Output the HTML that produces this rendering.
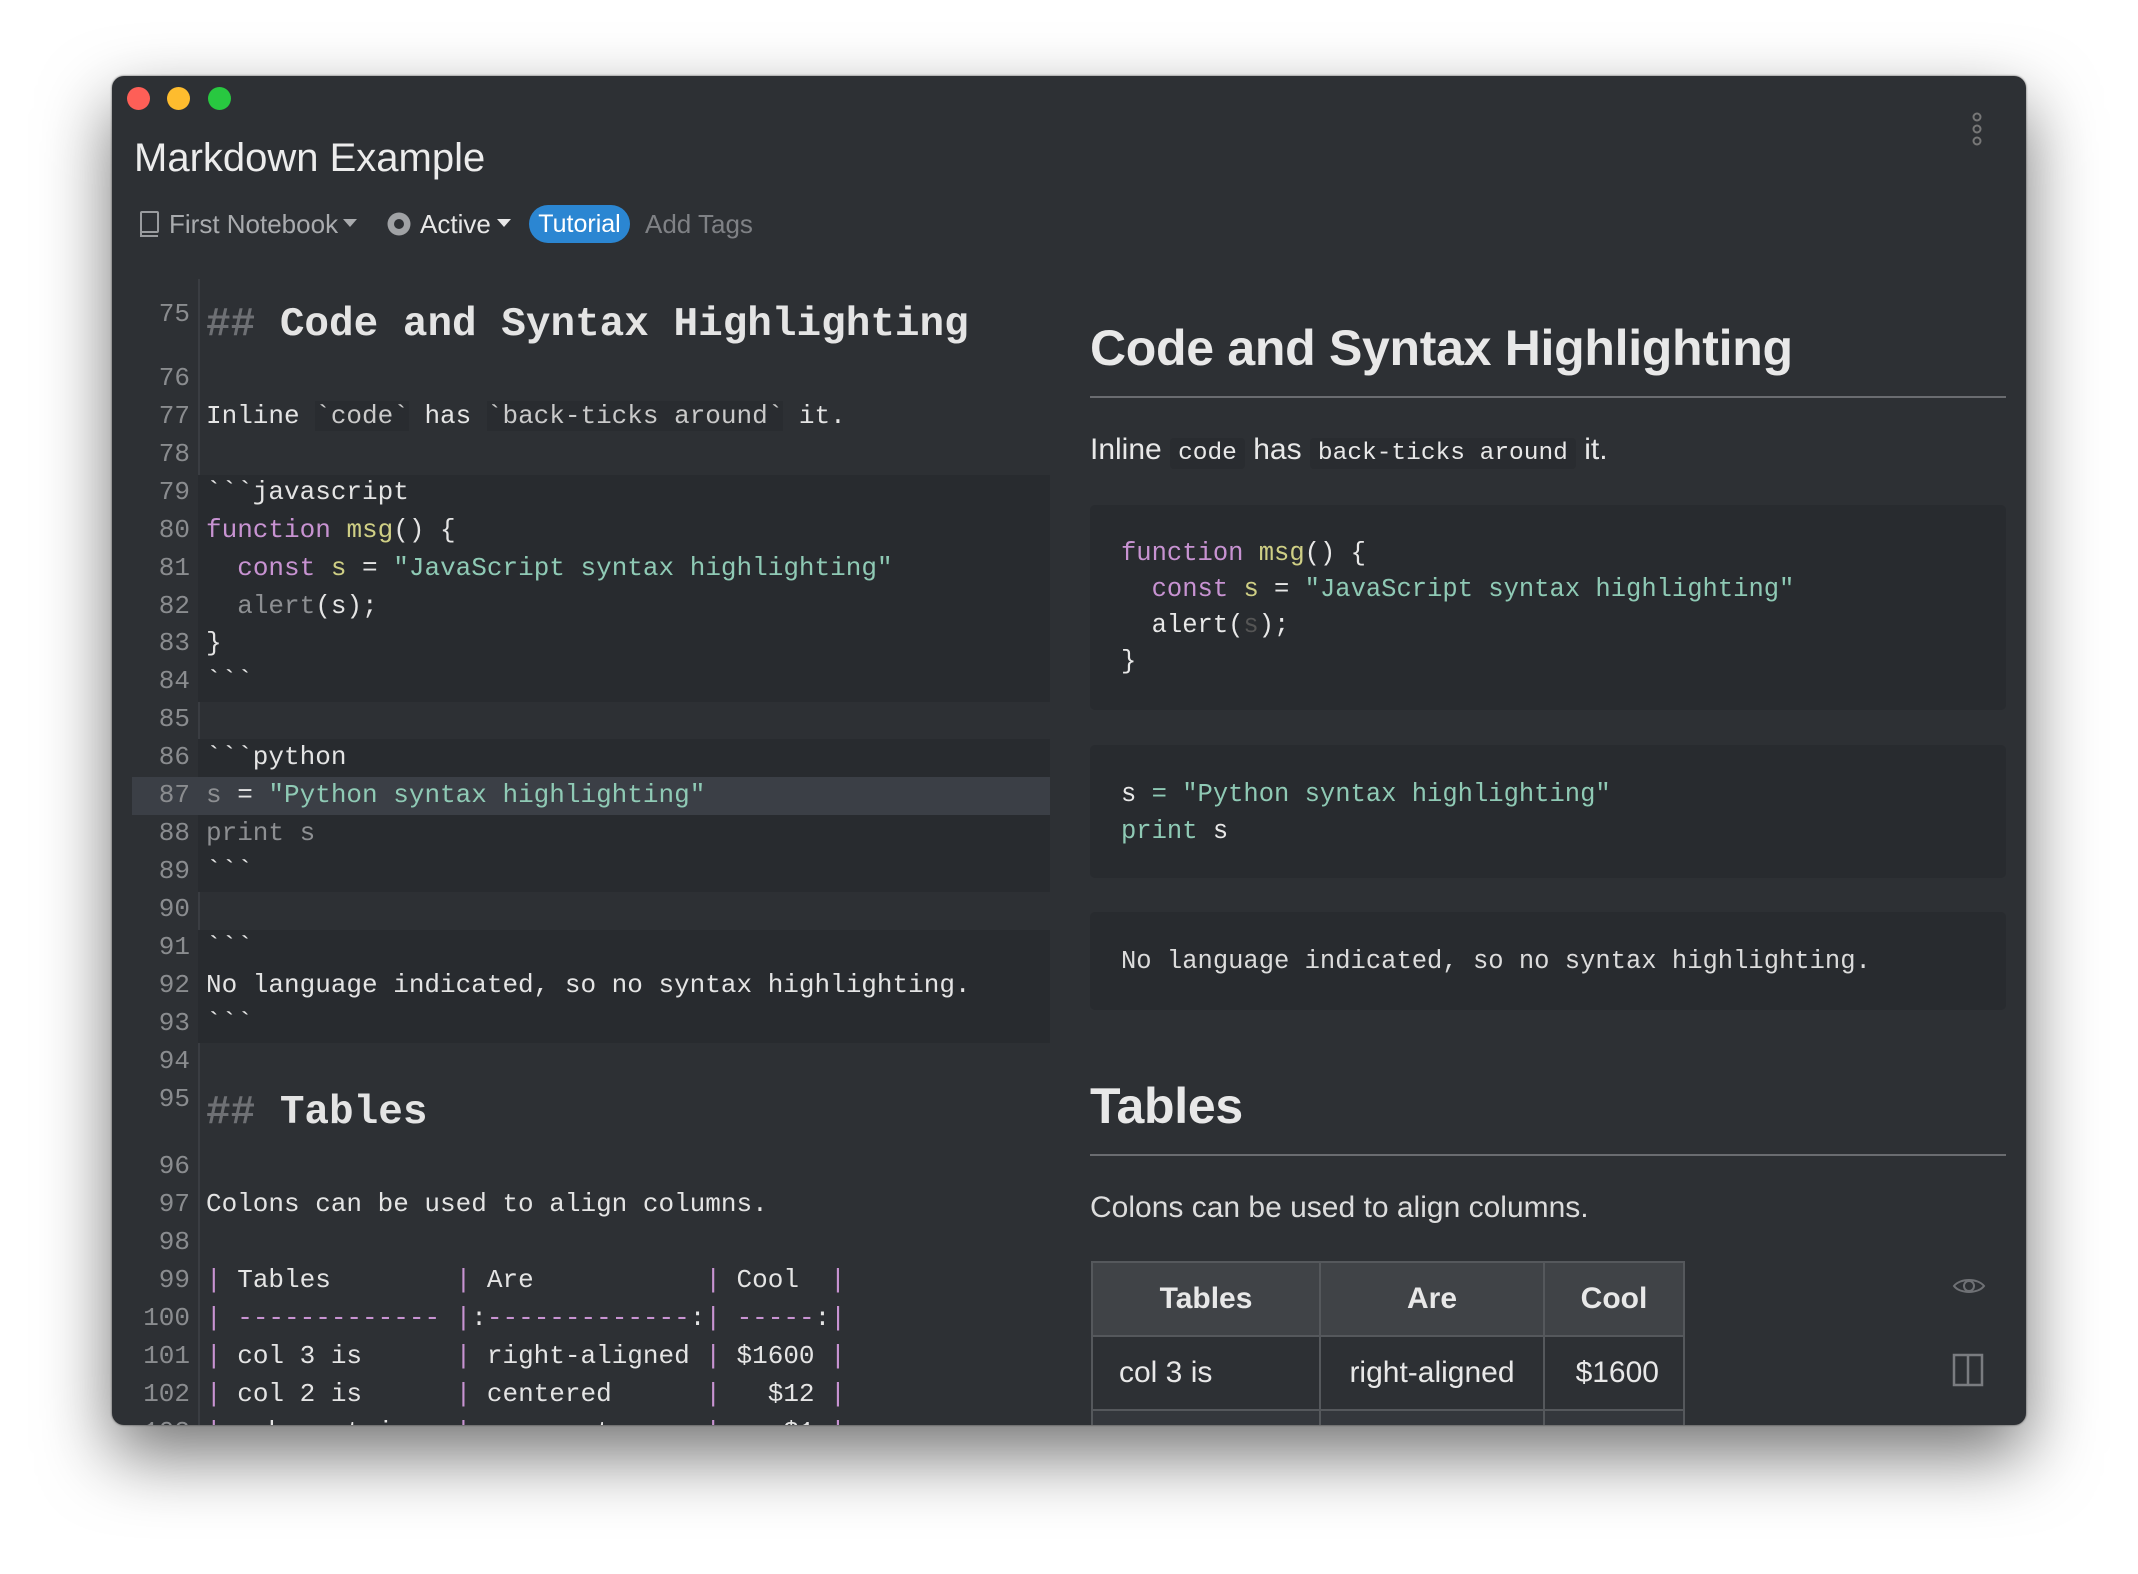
<!DOCTYPE html>
<html><head><meta charset="utf-8"><style>
*{margin:0;padding:0;box-sizing:border-box}
html,body{width:2138px;height:1574px;background:#fff;overflow:hidden;font-family:"Liberation Sans",sans-serif}
#win{position:absolute;left:112px;top:76px;width:1914px;height:1349px;background:#2d3034;border-radius:12px;box-shadow:0 30px 70px rgba(0,0,0,.55),0 0 2px rgba(0,0,0,.6);overflow:hidden}
.dot{position:absolute;top:11px;width:23px;height:23px;border-radius:50%}
.abs{position:absolute;white-space:pre}
#ed{position:absolute;left:0;top:203px;width:960px;height:1146px;overflow:hidden;font-family:"Liberation Mono",monospace;font-size:26px;color:#e4e4e4}
.ln{position:absolute;left:0;width:78px;text-align:right;color:#8a8c8f;height:38px;line-height:38px}
.tx{position:absolute;left:94px;white-space:pre;height:38px;line-height:38px}
.blk{position:absolute;left:86px;width:852px;background:#282b2f}
.k{color:#c893d2}.f{color:#cfcf85}.s{color:#8fcab5}.g{color:#8d8f92}.h{color:#6e7074}.p{color:#c893d2}.w{color:#d8d8d8}
#pv{position:absolute;left:978px;top:0;width:916px;height:1349px;color:#e8e8e8}
.h1{position:absolute;left:0;font-weight:bold;font-size:50px;white-space:pre;letter-spacing:-.3px}
.hr{position:absolute;left:0;width:916px;height:2px;background:#6a6c70}
.pr{position:absolute;left:0;width:916px;background:#282b2f;border-radius:5px}
.mono{font-family:"Liberation Mono",monospace;font-size:25.5px}
code{font-family:"Liberation Mono",monospace;font-size:24.5px;background:#292c30;padding:2px 8px;border-radius:4px}
table{position:absolute;left:1px;top:1185px;border-collapse:collapse;font-size:30px}
td,th{border:2px solid #55585c;height:74px}
th{background:#404347;font-weight:bold}
</style></head><body>
<div id="win">
<div class="dot" style="left:15px;background:#fe5f57"></div>
<div class="dot" style="left:55px;background:#febc2e"></div>
<div class="dot" style="left:96px;background:#28c840"></div>
<div class="abs" style="left:22px;top:56px;font-size:40px;line-height:52px;color:#ececec">Markdown Example</div>
<svg class="abs" style="left:1858px;top:36px" width="14" height="34" viewBox="0 0 14 34"><g fill="none" stroke="#777" stroke-width="2"><circle cx="7" cy="5" r="3.5"/><circle cx="7" cy="17" r="3.5"/><circle cx="7" cy="29" r="3.5"/></g></svg>
<svg class="abs" style="left:26px;top:134px" width="22" height="28" viewBox="0 0 22 28"><g fill="none" stroke="#9a9c9f" stroke-width="2"><rect x="3" y="2" width="17" height="20" rx="1"/><path d="M3 22v4h17"/></g></svg>
<div class="abs" style="left:57px;top:131px;font-size:26px;line-height:34px;color:#a9abae">First Notebook</div>
<svg class="abs" style="left:231px;top:142px" width="14" height="10"><path d="M0 1h14L7 9z" fill="#a9abae"/></svg>
<svg class="abs" style="left:274px;top:135px" width="26" height="26"><circle cx="13" cy="13" r="11.5" fill="#a0a2a5"/><circle cx="13" cy="13" r="5" fill="#2d3034"/></svg>
<div class="abs" style="left:308px;top:131px;font-size:26px;line-height:34px;color:#e8e8e8">Active</div>
<svg class="abs" style="left:385px;top:142px" width="14" height="10"><path d="M0 1h14L7 9z" fill="#e8e8e8"/></svg>
<div class="abs" style="left:417px;top:129px;width:101px;height:38px;border-radius:19px;background:#2b86d2;color:#fff;font-size:25px;line-height:38px;text-align:center">Tutorial</div>
<div class="abs" style="left:533px;top:131px;font-size:26px;line-height:34px;color:#7f8185">Add Tags</div>

<div id="ed">
<div style="position:absolute;left:86px;top:0;width:2px;height:1149px;background:#3a3d42"></div>
<div class="blk" style="top:196px;height:227px"></div>
<div class="blk" style="top:460px;height:153px"></div>
<div class="blk" style="top:651px;height:113px"></div>
<div style="position:absolute;left:20px;top:498px;width:918px;height:38px;background:#3b3f46"></div>
<div class="ln" style="top:-27px">74</div>
<div class="ln" style="top:16px">75</div>
<div class="tx" style="top:13px;font-size:41px;font-weight:bold;height:66px;line-height:66px"><span class="h">##</span> Code and Syntax Highlighting</div>
<div class="ln" style="top:80px">76</div>
<div class="ln" style="top:118px">77</div><div class="tx" style="top:118px">Inline <span style="background:#292c30;color:#c9c9c9">&#96;code&#96;</span> has <span style="background:#292c30;color:#c9c9c9">&#96;back-ticks around&#96;</span> it.</div>
<div class="ln" style="top:156px">78</div>
<div class="ln" style="top:194px">79</div><div class="tx" style="top:194px">&#96;&#96;&#96;javascript</div>
<div class="ln" style="top:232px">80</div><div class="tx" style="top:232px"><span class="k">function</span> <span class="f">msg</span>() {</div>
<div class="ln" style="top:270px">81</div><div class="tx" style="top:270px">  <span class="k">const</span> <span class="f">s</span> = <span class="s">"JavaScript syntax highlighting"</span></div>
<div class="ln" style="top:308px">82</div><div class="tx" style="top:308px">  <span class="g">alert</span>(s);</div>
<div class="ln" style="top:345px">83</div><div class="tx" style="top:345px">}</div>
<div class="ln" style="top:383px">84</div><div class="tx" style="top:383px">&#96;&#96;&#96;</div>
<div class="ln" style="top:421px">85</div>
<div class="ln" style="top:459px">86</div><div class="tx" style="top:459px">&#96;&#96;&#96;python</div>
<div class="ln" style="top:497px">87</div><div class="tx" style="top:497px"><span class="g">s</span> = <span class="s">"Python syntax highlighting"</span></div>
<div class="ln" style="top:535px">88</div><div class="tx g" style="top:535px">print s</div>
<div class="ln" style="top:573px">89</div><div class="tx" style="top:573px">&#96;&#96;&#96;</div>
<div class="ln" style="top:611px">90</div>
<div class="ln" style="top:649px">91</div><div class="tx" style="top:649px">&#96;&#96;&#96;</div>
<div class="ln" style="top:687px">92</div><div class="tx" style="top:687px">No language indicated, so no syntax highlighting.</div>
<div class="ln" style="top:725px">93</div><div class="tx" style="top:725px">&#96;&#96;&#96;</div>
<div class="ln" style="top:763px">94</div>
<div class="ln" style="top:801px">95</div>
<div class="tx" style="top:801px;font-size:41px;font-weight:bold;height:66px;line-height:66px"><span class="h">##</span> Tables</div>
<div class="ln" style="top:868px">96</div>
<div class="ln" style="top:906px">97</div><div class="tx" style="top:906px">Colons can be used to align columns.</div>
<div class="ln" style="top:944px">98</div>
<div class="ln" style="top:982px">99</div><div class="tx" style="top:982px"><span class="p">|</span> Tables        <span class="p">|</span> Are           <span class="p">|</span> Cool  <span class="p">|</span></div>
<div class="ln" style="top:1020px">100</div><div class="tx" style="top:1020px"><span class="p">|</span> <span class="p">-------------</span> <span class="p">|</span>:<span class="p">-------------</span>:<span class="p">|</span> <span class="p">-----</span>:<span class="p">|</span></div>
<div class="ln" style="top:1058px">101</div><div class="tx" style="top:1058px"><span class="p">|</span> col 3 is      <span class="p">|</span> right-aligned <span class="p">|</span> $1600 <span class="p">|</span></div>
<div class="ln" style="top:1096px">102</div><div class="tx" style="top:1096px"><span class="p">|</span> col 2 is      <span class="p">|</span> centered      <span class="p">|</span>   $12 <span class="p">|</span></div>
<div class="ln" style="top:1134px">103</div><div class="tx" style="top:1134px"><span class="p">|</span> zebra stripes <span class="p">|</span> are neat      <span class="p">|</span>    $1 <span class="p">|</span></div>
</div>

<div id="pv">
<div class="h1" style="top:240px;line-height:64px">Code and Syntax Highlighting</div>
<div class="hr" style="top:320px"></div>
<div class="abs" style="left:0;top:354px;font-size:30px;line-height:40px">Inline <code>code</code> has <code>back-ticks around</code> it.</div>
<div class="pr" style="top:429px;height:205px"></div>
<div class="abs mono" style="left:31px;top:460px;line-height:36px"><span class="k">function</span> <span class="f">msg</span>() {
  <span class="k">const</span> <span class="f">s</span> = <span class="s">"JavaScript syntax highlighting"</span>
  alert(<span style="color:#555">s</span>);
}</div>
<div class="pr" style="top:669px;height:133px"></div>
<div class="abs mono" style="left:31px;top:700px;line-height:37px">s <span class="s">= "Python syntax highlighting"</span>
<span class="s">print</span> s</div>
<div class="pr" style="top:836px;height:98px"></div>
<div class="abs mono" style="left:31px;top:868px;line-height:36px;color:#dcdcdc">No language indicated, so no syntax highlighting.</div>
<div class="h1" style="top:998px;line-height:64px">Tables</div>
<div class="hr" style="top:1078px"></div>
<div class="abs" style="left:0;top:1112px;font-size:30px;line-height:40px;color:#dcdcdc">Colons can be used to align columns.</div>
<table>
<tr><th style="width:228px">Tables</th><th style="width:224px">Are</th><th style="width:140px">Cool</th></tr>
<tr><td style="padding-left:26px">col 3 is</td><td style="text-align:center">right-aligned</td><td style="text-align:right;padding-right:24px">$1600</td></tr>
<tr><td style="background:#34373c"></td><td style="background:#34373c"></td><td style="background:#34373c"></td></tr>
</table>
</div>
<svg class="abs" style="left:1840px;top:1199px" width="34" height="22" viewBox="0 0 34 22"><g fill="none" stroke="#6f7175" stroke-width="2"><path d="M2 11C8 3 26 3 32 11C26 19 8 19 2 11z"/><circle cx="17" cy="11" r="5"/></g></svg>
<svg class="abs" style="left:1840px;top:1277px" width="32" height="34" viewBox="0 0 32 34"><g fill="none" stroke="#7a7c80" stroke-width="2.5"><rect x="2" y="2" width="28" height="30"/><path d="M16 2v30"/></g></svg>
</div>
</body></html>
